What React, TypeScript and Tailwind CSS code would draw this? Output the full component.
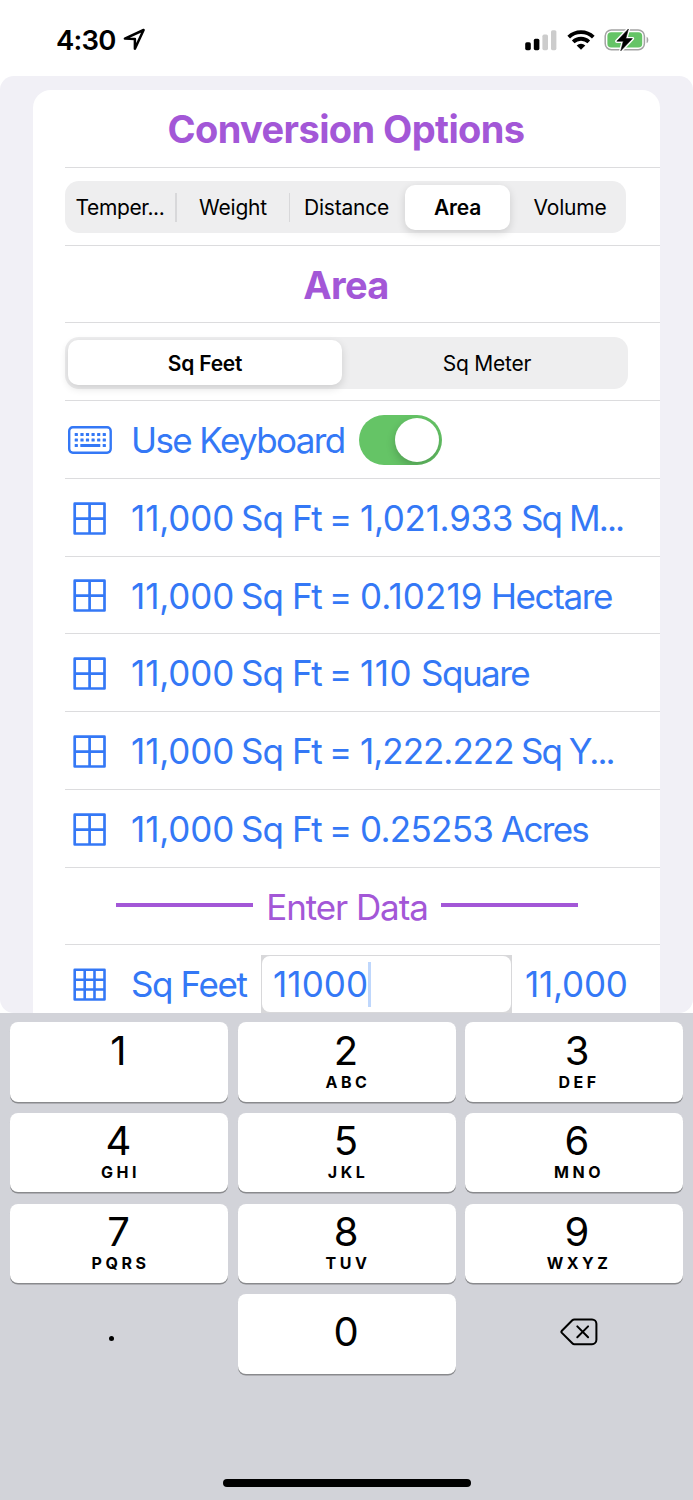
import type { ReactNode } from "react";

function LocationArrow() {
  return (
    <svg className="ml-[7px] h-[23px] w-[23px] shrink-0" viewBox="0 0 23 23" fill="none" stroke="#000" strokeWidth="2.5" strokeLinejoin="round">
      <path d="M1.9 10.6 20.6 2 11.9 20.7V10.9Z" />
    </svg>
  );
}

function SignalBars() {
  return (
    <svg className="h-[22px] w-[32px]" viewBox="0 0 32 22">
      <rect x="0.2" y="13.3" width="5.6" height="7.9" rx="1.6" fill="#000" />
      <rect x="8.8" y="9.8" width="5.6" height="11.4" rx="1.6" fill="#000" />
      <rect x="17.4" y="5.6" width="5.6" height="15.6" rx="1.6" fill="#ccc" />
      <rect x="26" y="1.2" width="5.4" height="20" rx="1.6" fill="#ccc" />
    </svg>
  );
}

function Wifi() {
  return (
    <svg className="h-[22px] w-[28px]" viewBox="0 0 28 22">
      <g fill="none" stroke="#000" strokeWidth="3.8">
        <path d="M1.7 8.1a17.7 17.7 0 0 1 24.6 0" />
        <path d="M6.2 12.9a11.2 11.2 0 0 1 15.6 0" />
      </g>
      <path d="M14 20.8 9.7 16.6a6.2 6.2 0 0 1 8.6 0Z" fill="#000" />
    </svg>
  );
}

function Battery() {
  return (
    <svg className="h-[24px] w-[46px]" viewBox="0 0 46 24">
      <rect x="1.2" y="1.9" width="39.2" height="19.8" rx="6.2" fill="none" stroke="#a3a3a3" strokeWidth="1.5" />
      <path d="M42.6 8.8c2.3.9 2.3 5.5 0 6.4Z" fill="#a3a3a3" />
      <rect x="3.4" y="4.3" width="34.8" height="15.2" rx="3.8" fill="#65c466" />
      <path d="M24.4 1 12.8 13.2h6.5L16.8 22.8 28.4 10.6h-6.6Z" fill="#000" stroke="#fff" strokeWidth="3.4" strokeLinejoin="round" />
      <path d="M24.4 1 12.8 13.2h6.5L16.8 22.8 28.4 10.6h-6.6Z" fill="#000" stroke="#000" strokeWidth="0.6" strokeLinejoin="round" />
    </svg>
  );
}

function KeyboardIcon() {
  const cols = [6.7, 12.4, 17.9, 23.5, 29.1, 34.7];
  return (
    <svg className="h-[28px] w-[44px]" viewBox="0 0 44 28">
      <rect x="1.2" y="1.3" width="41.5" height="25.4" rx="3.6" fill="none" stroke="#3478f6" strokeWidth="2.4" />
      <g fill="#3478f6">
        {[6.9, 12.4].map((y) => cols.map((x) => <rect key={`${x}-${y}`} x={x} y={y} width="3.2" height="3.2" rx="0.5" />))}
        <rect x="6.7" y="17.9" width="3.2" height="3.2" rx="0.5" />
        <rect x="12.3" y="17.9" width="20" height="3.2" rx="0.5" />
        <rect x="34.7" y="17.9" width="3.2" height="3.2" rx="0.5" />
      </g>
    </svg>
  );
}

function Grid2() {
  return (
    <svg className="h-[33px] w-[33px]" viewBox="0 0 33 33" fill="none" stroke="#3478f6" strokeWidth="2.7" strokeLinejoin="round">
      <rect x="1.7" y="1.7" width="29.8" height="29.8" />
      <path d="M16.6 1.7v29.8M1.7 16.6h29.8" />
    </svg>
  );
}

function Grid3() {
  return (
    <svg className="h-[33px] w-[33px]" viewBox="0 0 33 33" fill="none" stroke="#3478f6" strokeWidth="2.6" strokeLinejoin="round">
      <rect x="1.7" y="1.7" width="29.8" height="29.8" />
      <path d="M11.7 1.7v29.8M21.5 1.7v29.8M1.7 11.7h29.8M1.7 21.5h29.8" />
    </svg>
  );
}

function Backspace() {
  return (
    <svg className="h-[28px] w-[38px]" viewBox="0 0 38 28" fill="none" stroke="#000" strokeWidth="2" strokeLinecap="round" strokeLinejoin="round">
      <path d="M14.4 1.4H32a4.4 4.4 0 0 1 4.4 4.4v16A4.4 4.4 0 0 1 32 26.2H14.4a3 3 0 0 1-2.1-.9L1.9 14.9a1.6 1.6 0 0 1 0-2.2L12.3 2.3a3 3 0 0 1 2.1-.9Z" />
      <path d="m17.3 8.4 10.8 10.8M28.1 8.4 17.3 19.2" />
    </svg>
  );
}

function Row({ children }: { children: ReactNode }) {
  return <div className="ml-[32px] flex h-[77.75px] items-center border-b border-[#dcdcde] pt-[2px]">{children}</div>;
}

function IconRow({ icon, children }: { icon: ReactNode; children: ReactNode }) {
  return (
    <>
      <div className="mr-[17px] flex w-[49px] shrink-0 justify-center">{icon}</div>
      {children}
    </>
  );
}

const results: { value: string; valueClass: string; unit: string; unitClass: string }[] = [
  { value: "1,021.933", valueClass: "w-[161px] tracking-[-0.3px]", unit: "Sq M...", unitClass: "tracking-[-1.9px]" },
  { value: "0.10219", valueClass: "w-[131px] tracking-[0.1px]", unit: "Hectare", unitClass: "tracking-[-1.4px]" },
  { value: "110", valueClass: "w-[61px] tracking-[0.5px]", unit: "Square", unitClass: "tracking-[-1.5px]" },
  { value: "1,222.222", valueClass: "w-[161px] tracking-[-1px]", unit: "Sq Y...", unitClass: "tracking-[-2px]" },
  { value: "0.25253", valueClass: "w-[141px] tracking-[-0.7px]", unit: "Acres", unitClass: "tracking-[-1.7px]" },
];

const keys: [string, string][] = [
  ["1", ""],
  ["2", "ABC"],
  ["3", "DEF"],
  ["4", "GHI"],
  ["5", "JKL"],
  ["6", "MNO"],
  ["7", "PQRS"],
  ["8", "TUV"],
  ["9", "WXYZ"],
];

export default function App() {
  return (
    <div className="flex h-[1500px] w-[693px] flex-col overflow-hidden bg-white font-['Inter',sans-serif] text-black">
      <header className="flex h-[76px] shrink-0 items-center justify-between pt-[3px] pr-[43px] pl-[56px]">
        <div className="flex h-[28px] items-center">
          <span className="text-[27.5px] leading-[28px] font-semibold tracking-[-0.8px]">4:30</span>
          <LocationArrow />
        </div>
        <div className="flex items-center">
          <SignalBars />
          <span className="w-[10px]" />
          <Wifi />
          <span className="w-[9px]" />
          <Battery />
        </div>
      </header>

      <main className="h-[936.5px] shrink-0 overflow-hidden rounded-[14px] bg-[#f1f0f6] pt-[14px] pr-[33px] pl-[33px]">
        <div className="h-[940px] rounded-t-[18px] bg-white whitespace-nowrap">
          <Row>
            <h1 className="mr-[33px] w-full text-center text-[38px] leading-[44px] font-bold tracking-[-0.6px] text-[#a357d7]">Conversion Options</h1>
          </Row>
          <Row>
            <div className="flex h-[52px] w-[561px] items-center rounded-[14px] bg-[#eeeeef] text-[21px] tracking-[-0.2px]">
              <div className="w-[110px] pt-[2px] text-center tracking-[-0.4px]">Temper...</div>
              <div className="h-[29px] w-[1.5px] bg-[#d8d8da]" />
              <div className="w-[112px] pt-[2px] pl-px text-center">Weight</div>
              <div className="h-[29px] w-[1.5px] bg-[#d8d8da]" />
              <div className="w-[112px] pt-[2px] pl-px text-center">Distance</div>
              <div className="ml-[3px] flex h-[45px] w-[105px] shrink-0 items-center justify-center rounded-[10px] bg-white pt-[2px] font-semibold shadow-[0_3px_9px_rgba(0,0,0,0.14)]">Area</div>
              <div className="flex-1 pt-[2px] pl-[4px] text-center">Volume</div>
            </div>
          </Row>
          <Row>
            <h2 className="mr-[33px] w-full text-center text-[38px] leading-[44px] font-bold tracking-[-0.6px] text-[#a357d7]">Area</h2>
          </Row>
          <Row>
            <div className="flex h-[52px] w-[563px] items-center rounded-[14px] bg-[#eeeeef] text-[21px] tracking-[-0.2px]">
              <div className="ml-[3px] flex h-[45px] w-[274px] items-center justify-center rounded-[10px] bg-white pt-[2px] font-semibold shadow-[0_3px_9px_rgba(0,0,0,0.14)]">Sq Feet</div>
              <div className="flex-1 pt-[2px] pl-[4px] text-center">Sq Meter</div>
            </div>
          </Row>
          <Row>
            <IconRow icon={<KeyboardIcon />}>
              <span className="w-[228px] text-[35px] tracking-[-1.6px] text-[#3478f6]">Use Keyboard</span>
              <div className="flex h-[50px] w-[83px] items-center justify-end overflow-hidden rounded-full bg-[#65c466] pr-[3px]">
                <div className="h-[44px] w-[44px] rounded-full bg-white shadow-[0_4px_10px_rgba(0,0,0,0.2)]" />
              </div>
            </IconRow>
          </Row>
          {results.map((r) => (
            <Row key={r.value}>
              <IconRow icon={<Grid2 />}>
                <div className="flex text-[35px] text-[#3478f6]">
                  <span className="w-[110px] tracking-[-0.1px]">11,000</span>
                  <span className="w-[51px] tracking-[-1px]">Sq</span>
                  <span className="w-[37px] tracking-[-1.4px]">Ft</span>
                  <span className="w-[31px]">=</span>
                  <span className={r.valueClass}>{r.value}</span>
                  <span className={r.unitClass}>{r.unit}</span>
                </div>
              </IconRow>
            </Row>
          ))}
          <Row>
            <div className="ml-[51px] flex w-[462px] items-center justify-between text-[35px] text-[#a357d7]">
              <div className="mb-[3px] h-[4px] w-[137px] bg-[#a357d7]" />
              <span className="tracking-[-1.1px]">Enter Data</span>
              <div className="mb-[3px] h-[4px] w-[137px] bg-[#a357d7]" />
            </div>
          </Row>
          <div className="ml-[32px] flex h-[77.75px] items-center">
            <IconRow icon={<Grid3 />}>
              <span className="w-[130px] text-[35px] tracking-[-1.4px] text-[#3478f6]">Sq Feet</span>
              <div className="h-[58px] w-[251px] bg-[#d8d8da] p-px">
                <div className="flex h-full items-center rounded-[8px] bg-white pl-[11px] text-[35px] tracking-[0.1px] text-[#3478f6]">
                  11000
                  <span className="h-[45px] w-[3px] bg-[#bfd7fc]" />
                </div>
              </div>
              <span className="ml-[13px] text-[35px] tracking-[-0.2px] text-[#3478f6]">11,000</span>
            </IconRow>
          </div>
        </div>
      </main>

      <section className="flex flex-1 flex-col bg-[#d2d3d9] px-[10px] pt-[9.5px]">
        <div className="grid grid-cols-3 gap-x-[9.5px] gap-y-[11.3px]">
          {keys.map(([digit, letters], i) => (
            <div
              key={digit}
              className={
                i % 3 === 2
                  ? "flex h-[79.5px] flex-col items-center rounded-[8px] bg-white pt-[6.5px] pl-[7px] shadow-[0_1.5px_0_#898a8d]"
                  : "flex h-[79.5px] flex-col items-center rounded-[8px] bg-white pt-[6.5px] shadow-[0_1.5px_0_#898a8d]"
              }
            >
              <span className="pr-px text-[40px] leading-[44px]">{digit}</span>
              <span className="-mt-px pl-[3px] text-[16px] leading-[20px] font-bold tracking-[3.5px]">{letters}</span>
            </div>
          ))}
          <div className="flex items-center justify-center pt-[9px] pr-[15px]">
            <span className="h-[5px] w-[5px] rounded-full bg-black" />
          </div>
          <div className="flex h-[79.5px] justify-center rounded-[8px] bg-white pt-[16px] shadow-[0_1.5px_0_#898a8d]">
            <span className="pr-px text-[40px] leading-[44px]">0</span>
          </div>
          <div className="flex items-center justify-center pb-[4px] pl-[9px]">
            <Backspace />
          </div>
        </div>
        <div className="mt-auto mb-[13px] h-[8px] w-[248px] self-center rounded-full bg-black" />
      </section>
    </div>
  );
}
